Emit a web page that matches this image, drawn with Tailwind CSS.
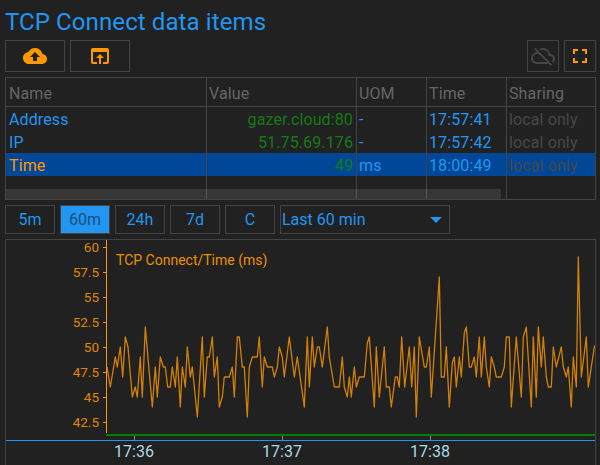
<!doctype html>
<html>
<head>
<meta charset="utf-8">
<script src="https://cdn.jsdelivr.net/npm/@tailwindcss/browser@4"></script>
</head>
<body class="m-0 bg-[#212121]">
<div class="w-[600px] h-[465px] overflow-hidden bg-[#212121] font-['Roboto',sans-serif] pl-[5px] pr-[4px] flex flex-col">
  <h1 class="h-[40px] leading-[45px] text-[24px] tracking-[0.1px] font-normal text-[#2196f3] whitespace-nowrap">TCP Connect data items</h1>
  <div class="flex items-start h-[32px] mt-0">
    <button class="w-[60px] h-[32px] border border-[#444] flex items-center justify-center mr-[5px]">
      <svg width="24" height="24" viewBox="0 0 24 24" fill="#ff9800"><path d="M19.35 10.04C18.67 6.59 15.64 4 12 4 9.11 4 6.6 5.64 5.35 8.04 2.34 8.36 0 10.91 0 14c0 3.31 2.69 6 6 6h13c2.76 0 5-2.24 5-5 0-2.64-2.05-4.78-4.65-4.96zM14 13v4h-4v-4H7l5-5 5 5h-3z"/></svg>
    </button>
    <button class="w-[60px] h-[32px] border border-[#444] flex items-center justify-center">
      <svg width="24" height="24" viewBox="0 0 24 24" fill="#ff9800"><path d="M19 4H5c-1.11 0-2 .9-2 2v12c0 1.1.89 2 2 2h4v-2H5V8h14v10h-4v2h4c1.1 0 2-.9 2-2V6c0-1.1-.89-2-2-2zm-7 6l-4 4h3v6h2v-6h3l-4-4z"/></svg>
    </button>
    <div class="flex-1"></div>
    <button class="w-[32px] h-[32px] border border-[#444] flex items-center justify-center mr-[5px]">
      <svg width="24" height="24" viewBox="0 0 24 24" fill="#444"><path d="M24 15c0-2.64-2.05-4.78-4.65-4.96C18.67 6.59 15.64 4 12 4c-1.33 0-2.57.36-3.65.97l1.49 1.49C10.51 6.17 11.23 6 12 6c3.04 0 5.5 2.46 5.5 5.5v.5H19c1.66 0 3 1.34 3 3 0 .99-.48 1.85-1.21 2.4l1.41 1.41c1.09-.92 1.8-2.27 1.8-3.81zM4.41 3.86L3 5.27l2.77 2.77h-.42C2.34 8.36 0 10.91 0 14c0 3.31 2.69 6 6 6h11.73l2 2 1.41-1.41L4.41 3.86zM6 18c-2.21 0-4-1.79-4-4s1.79-4 4-4h1.73l8 8H6z"/></svg>
    </button>
    <button class="w-[32px] h-[32px] border border-[#444] flex items-center justify-center">
      <svg width="24" height="24" viewBox="0 0 24 24" fill="#ff9800"><path d="M7 14H5v5h5v-2H7v-3zm-2-4h2V7h3V5H5v5zm12 7h-3v2h5v-5h-2v3zM14 5v2h3v3h2V5h-5z"/></svg>
    </button>
  </div>
  <div class="relative mt-[5px] h-[123px] border border-[#444] text-[16px] tracking-[0.12px] leading-[25px] overflow-hidden">
    <div class="absolute left-[200px] top-0 bottom-0 w-px bg-[#444]"></div>
    <div class="absolute left-[350px] top-0 bottom-0 w-px bg-[#444]"></div>
    <div class="absolute left-[420px] top-0 bottom-0 w-px bg-[#444]"></div>
    <div class="absolute left-[500px] top-0 bottom-0 w-px bg-[#444]"></div>
    <div class="grid grid-cols-[200px_150px_70px_80px_1fr] h-[29px] leading-[31px] border-b border-[#444] text-[#666]">
      <div class="pl-[3px]">Name</div><div class="pl-[3px]">Value</div><div class="pl-[3px]">UOM</div><div class="pl-[3px]">Time</div><div class="pl-[3px]">Sharing</div>
    </div>
    <div class="grid grid-cols-[200px_150px_70px_80px_1fr] h-[23px]">
      <div class="pl-[3px] text-[#2196f3]">Address</div><div class="pr-[3px] text-right text-[#157a15]">gazer.cloud:80</div><div class="pl-[3px] text-[#2196f3]">-</div><div class="pl-[3px] text-[#2196f3]">17:57:41</div><div class="pl-[3px] text-[#484848]">local only</div>
    </div>
    <div class="grid grid-cols-[200px_150px_70px_80px_1fr] h-[23px]">
      <div class="pl-[3px] text-[#2196f3]">IP</div><div class="pr-[3px] text-right text-[#157a15]">51.75.69.176</div><div class="pl-[3px] text-[#2196f3]">-</div><div class="pl-[3px] text-[#2196f3]">17:57:42</div><div class="pl-[3px] text-[#484848]">local only</div>
    </div>
    <div class="grid grid-cols-[200px_150px_70px_80px_1fr] h-[23px] bg-[#004797]">
      <div class="pl-[3px] text-[#ff9800]">Time</div><div class="pr-[3px] text-right text-[#157a15]">49</div><div class="pl-[3px] text-[#2196f3]">ms</div><div class="pl-[3px] text-[#2196f3]">18:00:49</div><div class="pl-[3px] text-[#484848]">local only</div>
    </div>
    <div class="absolute left-0 bottom-0 w-[495px] h-[10px] bg-white/10"></div>
  </div>
  <div class="flex items-start gap-[5px] mt-[5px] h-[29px] text-[16px] text-[#2196f3]">
    <button class="w-[50px] h-[29px] border border-[#444]">5m</button>
    <button class="w-[50px] h-[29px] border border-[#444] bg-[#2196f3] text-[#1a4f7d]">60m</button>
    <button class="w-[50px] h-[29px] border border-[#444]">24h</button>
    <button class="w-[50px] h-[29px] border border-[#444]">7d</button>
    <button class="w-[50px] h-[29px] border border-[#444]">C</button>
    <div class="w-[170px] h-[29px] border border-[#444] flex items-center justify-between pl-[1px] pr-[7px]">
      <span>Last 60 min</span>
      <span class="w-0 h-0 border-x-[6px] border-x-transparent border-t-[6px] border-t-[#2196f3]"></span>
    </div>
  </div>
  <div class="mt-[5px] flex-1 border-l border-t border-r border-[#444] relative overflow-hidden">
    <svg class="absolute -left-[6px] -top-[240px] block" width="600" height="465" viewBox="0 0 600 465" font-family="Roboto, sans-serif">
      <g fill="#ff9800" font-size="13.5" text-anchor="end" opacity="0.85">
        <text x="99" y="252">60</text><text x="99" y="277">57.5</text><text x="99" y="302">55</text><text x="99" y="327">52.5</text><text x="99" y="352">50</text><text x="99" y="377">47.5</text><text x="99" y="402">45</text><text x="99" y="427">42.5</text>
      </g>
      <path d="M106.5 240V433M103 247.5h3M103 272.5h3M103 297.5h3M103 322.5h3M103 347.5h3M103 372.5h3M103 397.5h3M103 422.5h3" stroke="#ff9800" fill="none"/>
      <text x="116" y="265" font-size="14" fill="#e8900c">TCP Connect/Time (ms)</text>
      <path d="M134.5 436v4M282.5 436v4M430.5 436v4" stroke="#888" fill="none"/>
      <rect x="106" y="434" width="490" height="2" fill="#008000"/>
      <rect x="6" y="440" width="590" height="1" fill="#2196f3"/>
      <polyline fill="none" stroke="#ff9800" stroke-width="1.3" stroke-opacity="0.8" stroke-linejoin="round" points="107,367 110.3,387 115.3,357 117.3,367 120.3,347 122.7,377 125.3,337 128,347 132.3,397 135.3,387 137.3,397 140.3,357 142.3,397 145.3,327 152.3,407 155.3,367 157.3,397 160.3,357 163.3,367 165.3,367 167.7,387 170.3,387 172.3,367 175.3,387 177.3,357 180.3,407 182.3,367 185.3,387 187.3,347 190.3,377 192.3,367 197.3,417 202.3,337 204.3,397 207.3,357 209.3,357 212.3,337 214.3,377 217.3,357 219.3,407 222.3,397 224.3,377 229.3,377 232.3,367 234.3,397 237.3,337 239.3,337 242.3,367 244.3,367 247.3,417 249.3,367 252.3,357 257.3,357 259.3,337 262.3,387 264.3,357 267.3,367 272.3,367 274.3,377 277.3,367 279.3,347 282.3,357 284.3,377 289.3,337 294.3,377 297.3,357 304.3,407 307.3,337 309.3,387 312.3,337 314.3,367 317.3,347 319.3,347 322.3,367 327.3,327 329.3,357 334.3,387 339.3,387 342.3,357 344.3,387 347.3,397 349.3,377 351.3,397 354.3,367 356.3,387 359.3,377 364.3,377 367.3,343 369.3,337 374.3,407 376.3,347 379.3,397 384.3,347 386.3,387 389.3,387 391.3,407 395.3,377 397.3,377 399.3,387 401.7,337 404.7,387 409.3,347 411.7,387 414.3,347 416.3,417 419.3,337 424.3,367 426.3,367 429.3,347 431.3,397 439.3,277 441.3,377 444.3,377 446.3,347 449.3,407 452.3,363 454.3,357 456.3,387 459.3,357 461.3,377 464.3,333 466.3,327 469.3,367 471.3,367 474.3,357 476.3,377 479.3,337 481.3,377 484.3,337 486.3,367 489.3,387 491.3,357 494.3,367 496.3,377 501.3,377 504.3,367 506.3,337 509.3,337 511.3,407 516.3,337 521.3,397 523.3,337 526.3,327 531.3,407 533.3,337 536.3,397 538.3,327 541.3,367 543.3,337 546.3,377 548.3,387 551.3,387 553.3,347 556.3,367 561.3,347 563.3,367 566.3,377 568.3,367 571.3,407 573.3,357 576.3,387 578.3,257 581.3,377 586.3,337 588.3,387 591.3,367 594.3,347 596,344"/>
      <g fill="#add8e6" font-size="16" text-anchor="middle">
        <text x="134" y="457">17:36</text><text x="282" y="457">17:37</text><text x="430" y="457">17:38</text>
      </g>
    </svg>
  </div>
</div>
</body>
</html>
